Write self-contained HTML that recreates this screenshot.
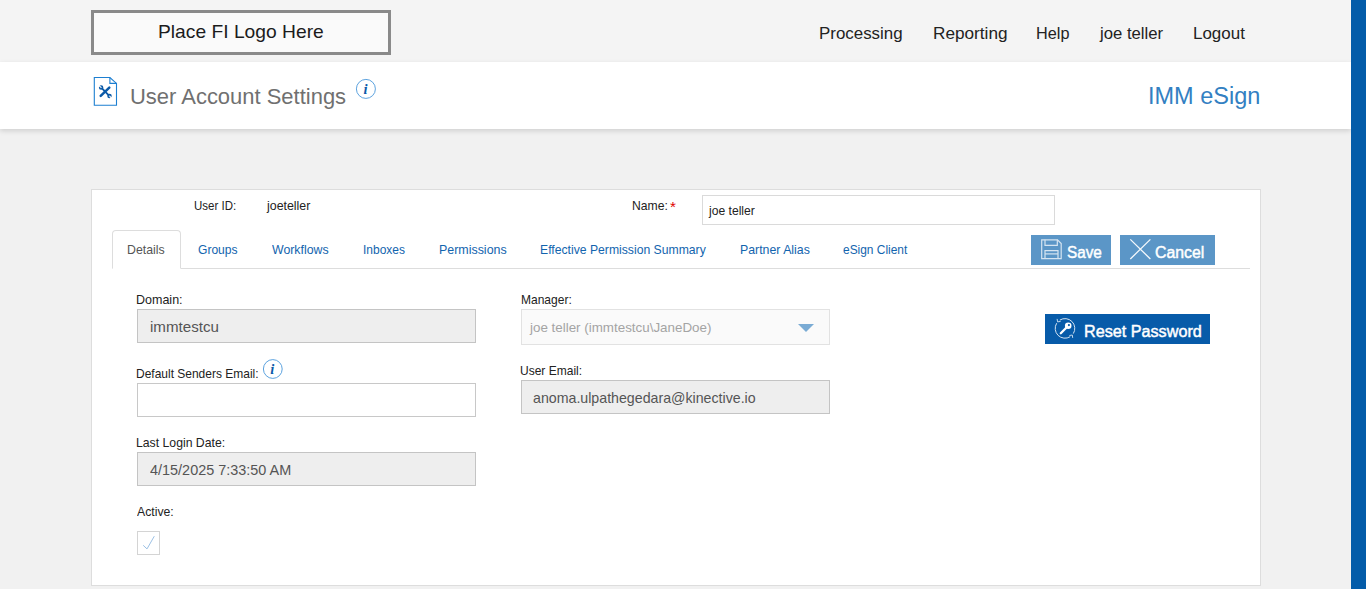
<!DOCTYPE html>
<html><head><meta charset="utf-8"><title>User Account Settings</title>
<style>
*{box-sizing:border-box;margin:0;padding:0}
html,body{width:1366px;height:589px;overflow:hidden;background:#f1f1f1;font-family:"Liberation Sans",sans-serif;}
.a,.t,svg{position:absolute}
.t{white-space:nowrap;transform-origin:0 0}
#hdr{left:0;top:0;width:1351px;height:62px;background:#f4f4f4}
#bar{left:0;top:62px;width:1351px;height:67px;background:#fff;box-shadow:0 2px 5px rgba(0,0,0,.14)}
#side{left:1351px;top:0;width:15px;height:589px;background:#045ca9}
#logo{left:91px;top:10px;width:300px;height:45px;border:3px solid #8a8a8a;background:#fafafa}
#panel{left:91px;top:189px;width:1170px;height:397px;background:#fff;border:1px solid #ddd}
#tabline{left:112px;top:268px;width:1138px;height:1px;background:#ddd}
#tab{left:112px;top:230px;width:69px;height:39px;border:1px solid #ddd;border-bottom:1px solid #fff;border-radius:4px 4px 0 0;background:#fff}
.in{border:1px solid #c4c4c4;background:#eee}
.inw{border:1px solid #c8c8c8;background:#fff}
.btn{background:#5b96c7}

</style></head><body>
<div class="a" id="hdr"></div>
<div class="a" id="bar"></div>
<div class="a" id="side"></div>
<div class="a" id="logo"></div>
<div class="a" id="panel"></div>
<div class="a" id="tabline"></div>
<div class="a" id="tab"></div>
<div class="a inw" style="left:702px;top:195px;width:353px;height:30px;border-color:#dadada"></div>
<div class="a in" style="left:137px;top:309px;width:339px;height:34px"></div>
<div class="a" style="left:521px;top:309px;width:309px;height:36px;border:1px solid #e2e2e2;background:#fafafa"></div>
<div class="a inw" style="left:137px;top:383px;width:339px;height:34px"></div>
<div class="a in" style="left:521px;top:380px;width:309px;height:34px"></div>
<div class="a in" style="left:137px;top:452px;width:339px;height:34px"></div>
<div class="a inw" style="left:137px;top:531px;width:23px;height:24px;border-color:#d4d4d4"></div>
<div class="a btn" style="left:1031px;top:235px;width:80px;height:30px"></div>
<div class="a btn" style="left:1120px;top:235px;width:95px;height:30px"></div>
<div class="a" style="left:1045px;top:314px;width:165px;height:30px;background:#075ba9"></div>
<!-- doc icon -->
<svg style="left:93px;top:76px" width="25" height="31" viewBox="0 0 25 31"><path d="M1.3 1.5H16.9L23.5 7.4V29.3H1.3Z" fill="#fff" stroke="#1d7fd1" stroke-width="1.1"/><path d="M16.9 1.5V7.4H23.5" fill="none" stroke="#1d7fd1" stroke-width="1.1"/><g stroke="#0b5aa8" fill="none" stroke-linecap="round"><path d="M7.7 19.9L16.3 11.7" stroke-width="2.5"/><path d="M9 12.4L15.6 19.2" stroke-width="1.9"/><circle cx="8.1" cy="11.6" r="1.5" stroke-width="1.5"/><circle cx="16.5" cy="20" r="1.5" stroke-width="1.5"/><path d="M7.6 11.1L5.6 9.1M17 20.5L19 22.5" stroke="#fff" stroke-width="1.3" stroke-linecap="butt"/></g></svg>
<!-- info icons -->
<svg style="left:355px;top:78px" width="22" height="22" viewBox="0 0 22 22"><circle cx="10.9" cy="10.9" r="9.5" fill="#fff" stroke="#4a97da" stroke-width="0.9"/></svg>
<div class="t" style="left:363.4px;top:80.5px;font-family:'Liberation Serif',serif;font-style:italic;font-weight:700;font-size:14.5px;line-height:16px;color:#0b5aa8">i</div>
<svg style="left:262px;top:358px" width="22" height="22" viewBox="0 0 22 22"><circle cx="10.8" cy="11" r="9.4" fill="#fff" stroke="#4a97da" stroke-width="0.9"/></svg>
<div class="t" style="left:270.3px;top:360.6px;font-family:'Liberation Serif',serif;font-style:italic;font-weight:700;font-size:14.5px;line-height:16px;color:#0b5aa8">i</div>
<!-- save icon -->
<svg style="left:1040px;top:238px" width="23" height="23" viewBox="0 0 23 23"><g fill="none" stroke="#d5e4f1" stroke-width="1.2"><path d="M1.7 1.8H17.5L21.2 5.5V20.6H1.7Z"/><path d="M5 1.8V7.4H17.3V1.8"/><path d="M5 20.6V12.6H18V20.6"/><path d="M5 15.9H18"/></g></svg>
<!-- cancel X -->
<svg style="left:1129px;top:238px" width="23" height="23" viewBox="0 0 23 23"><path d="M1.3 1.4L21.4 21M21.4 1.4L1.3 21" fill="none" stroke="#f4f8fc" stroke-width="1.3"/></svg>
<!-- reset key icon -->
<svg style="left:1053px;top:316px" width="24" height="25" viewBox="0 0 24 25"><g fill="none" stroke="#d3e3f2" stroke-width="1"><path d="M6.81 4.09A9.8 9.8 0 0 1 20.31 17.59"/><path d="M17.19 20.71A9.8 9.8 0 0 1 3.69 7.21"/><path d="M4.1 2.9L4.6 5.9L7.6 5.4" stroke-width="0.9"/><path d="M19.7 21.9L19.3 19L16.4 19.5" stroke-width="0.9"/></g><circle cx="15.2" cy="9.8" r="3.3" fill="#fff"/><circle cx="15.9" cy="9.1" r="1.1" fill="#0b5ca8"/><path d="M13 12L7.8 17.2" stroke-width="2.3" stroke="#fff" stroke-linecap="round"/></svg>
<!-- dropdown arrow -->
<svg style="left:797px;top:323px" width="18" height="10" viewBox="0 0 18 10"><path d="M1 1H17L9 9Z" fill="#7aabd4"/></svg>
<!-- check -->
<svg style="left:137px;top:531px" width="23" height="24" viewBox="0 0 23 24"><path d="M6.2 14.3L10 17.9L17.3 5.2" fill="none" stroke="#9cc1e5" stroke-width="1"/></svg>

<div class="t" style="left:158.02px;top:22px;font-size:19px;line-height:19px;color:#1c1c1c;font-weight:400;transform:scaleX(1.0127);">Place FI Logo Here</div>
<div class="t" style="left:818.84px;top:26px;font-size:16.8px;line-height:16.8px;color:#222;font-weight:400;transform:scaleX(1.0068);">Processing</div>
<div class="t" style="left:932.58px;top:26px;font-size:16.8px;line-height:16.8px;color:#222;font-weight:400;transform:scaleX(1.0246);">Reporting</div>
<div class="t" style="left:1035.93px;top:26px;font-size:16.8px;line-height:16.8px;color:#222;font-weight:400;transform:scaleX(0.9682);">Help</div>
<div class="t" style="left:1100.15px;top:26px;font-size:16.8px;line-height:16.8px;color:#222;font-weight:400;transform:scaleX(0.9944);">joe teller</div>
<div class="t" style="left:1192.84px;top:26px;font-size:16.8px;line-height:16.8px;color:#222;font-weight:400;transform:scaleX(1.0110);">Logout</div>
<div class="t" style="left:130.09px;top:86px;font-size:22.4px;line-height:22.4px;color:#707070;font-weight:400;transform:scaleX(0.9809);">User Account Settings</div>
<div class="t" style="left:1148.31px;top:85px;font-size:23px;line-height:23px;color:#3380c2;font-weight:400;transform:scaleX(1.0220);">IMM eSign</div>
<div class="t" style="left:193.87px;top:199px;font-size:13px;line-height:13px;color:#222;font-weight:400;transform:scaleX(0.8837);">User ID:</div>
<div class="t" style="left:267.25px;top:199px;font-size:13px;line-height:13px;color:#222;font-weight:400;transform:scaleX(0.9522);">joeteller</div>
<div class="t" style="left:632.12px;top:199px;font-size:13px;line-height:13px;color:#222;font-weight:400;transform:scaleX(0.9347);">Name:</div>
<div class="t" style="left:669.91px;top:200px;font-size:14px;line-height:14px;color:#e00000;font-weight:400;transform:scaleX(1.0875);">*</div>
<div class="t" style="left:708.85px;top:204px;font-size:13px;line-height:13px;color:#222;font-weight:400;transform:scaleX(0.9316);">joe teller</div>
<div class="t" style="left:127.30px;top:243px;font-size:13px;line-height:13px;color:#555;font-weight:400;transform:scaleX(0.9461);">Details</div>
<div class="t" style="left:198.34px;top:243px;font-size:13px;line-height:13px;color:#1264ae;font-weight:400;transform:scaleX(0.9280);">Groups</div>
<div class="t" style="left:271.95px;top:243px;font-size:13px;line-height:13px;color:#1264ae;font-weight:400;transform:scaleX(0.9483);">Workflows</div>
<div class="t" style="left:362.59px;top:243px;font-size:13px;line-height:13px;color:#1264ae;font-weight:400;transform:scaleX(0.9216);">Inboxes</div>
<div class="t" style="left:439.19px;top:243px;font-size:13px;line-height:13px;color:#1264ae;font-weight:400;transform:scaleX(0.9558);">Permissions</div>
<div class="t" style="left:540.21px;top:243px;font-size:13px;line-height:13px;color:#1264ae;font-weight:400;transform:scaleX(0.9378);">Effective Permission Summary</div>
<div class="t" style="left:740.20px;top:243px;font-size:13px;line-height:13px;color:#1264ae;font-weight:400;transform:scaleX(0.9479);">Partner Alias</div>
<div class="t" style="left:843.35px;top:243px;font-size:13px;line-height:13px;color:#1264ae;font-weight:400;transform:scaleX(0.9167);">eSign Client</div>
<div class="t" style="left:1066.79px;top:245px;font-size:16px;line-height:16px;color:#fff;font-weight:400;transform:scaleX(0.9557);-webkit-text-stroke:0.45px #fff;">Save</div>
<div class="t" style="left:1155.28px;top:245px;font-size:16px;line-height:16px;color:#fff;font-weight:400;transform:scaleX(0.9885);-webkit-text-stroke:0.45px #fff;">Cancel</div>
<div class="t" style="left:1084.34px;top:324px;font-size:16px;line-height:16px;color:#fff;font-weight:400;transform:scaleX(1.0110);-webkit-text-stroke:0.45px #fff;">Reset Password</div>
<div class="t" style="left:136.29px;top:293px;font-size:13px;line-height:13px;color:#222;font-weight:400;transform:scaleX(0.9620);">Domain:</div>
<div class="t" style="left:149.88px;top:320px;font-size:14.5px;line-height:14.5px;color:#555;font-weight:400;transform:scaleX(1.0430);">immtestcu</div>
<div class="t" style="left:520.83px;top:293px;font-size:13px;line-height:13px;color:#222;font-weight:400;transform:scaleX(0.9236);">Manager:</div>
<div class="t" style="left:530.27px;top:321px;font-size:13px;line-height:13px;color:#a4a4a4;font-weight:400;transform:scaleX(1.0293);">joe teller (immtestcu\JaneDoe)</div>
<div class="t" style="left:136.43px;top:367px;font-size:13px;line-height:13px;color:#222;font-weight:400;transform:scaleX(0.9218);">Default Senders Email:</div>
<div class="t" style="left:520.27px;top:364px;font-size:13px;line-height:13px;color:#222;font-weight:400;transform:scaleX(0.9238);">User Email:</div>
<div class="t" style="left:533.29px;top:391px;font-size:14.5px;line-height:14.5px;color:#555;font-weight:400;transform:scaleX(0.9785);">anoma.ulpathegedara@kinective.io</div>
<div class="t" style="left:136.42px;top:436px;font-size:13px;line-height:13px;color:#222;font-weight:400;transform:scaleX(0.9411);">Last Login Date:</div>
<div class="t" style="left:150.35px;top:463px;font-size:14.5px;line-height:14.5px;color:#555;font-weight:400;transform:scaleX(0.9954);">4/15/2025 7:33:50 AM</div>
<div class="t" style="left:137.35px;top:505px;font-size:13px;line-height:13px;color:#222;font-weight:400;transform:scaleX(0.9408);">Active:</div>
</body></html>
